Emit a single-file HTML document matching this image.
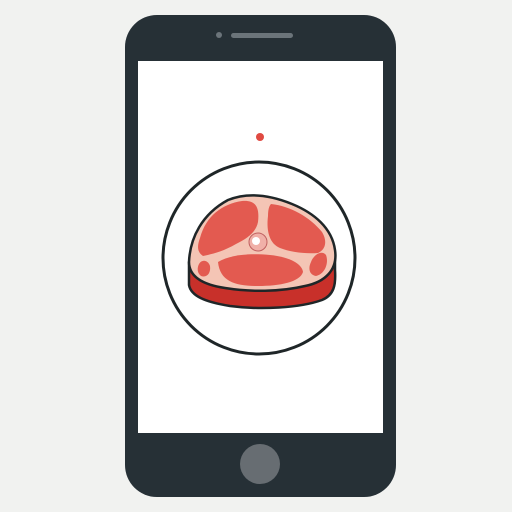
<!DOCTYPE html>
<html><head><style>
html,body{margin:0;padding:0;width:512px;height:512px;background:#f1f2f0;overflow:hidden}
</style></head><body>
<svg width="512" height="512" viewBox="0 0 512 512" xmlns="http://www.w3.org/2000/svg">
<rect x="125" y="15" width="271" height="482" rx="32" fill="#263036"/>
<rect x="138" y="61" width="245" height="372" fill="#ffffff"/>
<circle cx="219" cy="35" r="3" fill="#6b747a"/>
<rect x="231" y="33" width="62" height="5" rx="2.5" fill="#6b747a"/>
<circle cx="260" cy="464" r="20" fill="#676d72"/>
<circle cx="260" cy="137" r="4" fill="#e04a42"/>
<circle cx="259" cy="258" r="96" fill="none" stroke="#1f2628" stroke-width="3"/>
<path d="M189 262 L189 285 C191 296 205 302 230 306 C260 310 300 308 322 300 C334 295 336 285 335 270 L335 255 Z" fill="#c8302a" stroke="#1f2628" stroke-width="2.5" stroke-linejoin="round"/>
<path d="M189 262 C190 238 202 214 228 200 C248 192 270 195 292 204 C314 213 332 228 335 250 C338 270 325 282 305 286 C280 292 250 292 225 288 C205 285 189 278 189 262 Z" fill="#f4c5b5" stroke="#1f2628" stroke-width="2.5"/>
<path d="M200 238 C206 216 222 204 242 201 C254 200 260 205 258 222 C256 232 248 238 236 244 C222 252 212 254 203 256 C197 252 197 246 200 238 Z" fill="#e35a50"/>
<path d="M271 204 C290 206 310 217 322 232 C328 242 325 250 318 253 C305 254 290 252 280 248 C270 244 266 232 268 216 C268 210 269 206 271 204 Z" fill="#e35a50"/>
<path d="M218 262 C230 255 248 253 270 255 C290 257 302 264 303 272 C300 282 280 286 258 286 C236 286 220 282 218 262 Z" fill="#e35a50"/>
<path d="M199 264 C202 259 208 260 210 266 C211 273 207 278 201 276 C197 273 197 268 199 264 Z" fill="#e35a50"/>
<path d="M311 262 C314 254 322 250 326 255 C329 263 325 274 316 276 C309 275 308 268 311 262 Z" fill="#e35a50"/>
<circle cx="258" cy="242" r="9" fill="#f0b0a8" stroke="#c06060" stroke-width="1"/>
<circle cx="256" cy="241" r="4" fill="#ffffff"/>
</svg>
</body></html>
